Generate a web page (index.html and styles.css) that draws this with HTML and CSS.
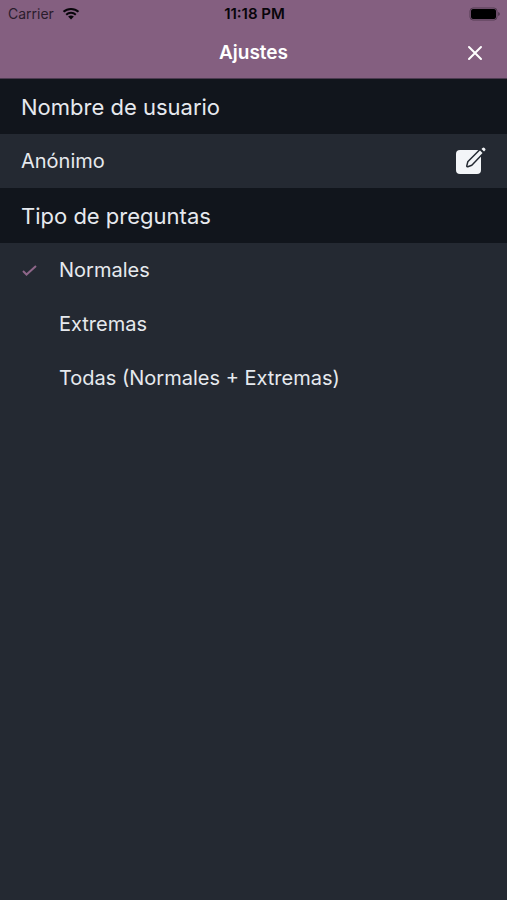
FILE: index.html
```html
<!DOCTYPE html>
<html lang="es">
<head>
  <meta charset="utf-8">
  <meta name="viewport" content="width=device-width, initial-scale=1">
  <title>Ajustes</title>
  <link rel="stylesheet" href="styles.css">
</head>
<body>
  <header class="top">
    <div class="status">
      <span class="carrier">Carrier
        <svg class="wifi" viewBox="0 0 18 13" aria-hidden="true">
          <path d="M1.500 4.800C5.700 .9 12.300 .9 16.500 4.800M4.200 7.700C6.900 5.200 11.100 5.200 13.800 7.700"/>
          <path class="solid" d="M6.100 9.600Q9 7.300 11.900 9.600L9 12.600Z"/>
        </svg>
      </span>
      <span class="clock">11:18 PM</span>
      <svg class="battery" viewBox="0 0 32 14" aria-hidden="true">
        <rect class="shell" x="1" y="1" width="27" height="12" rx="3"/>
        <rect x="2" y="2" width="25" height="10" rx="2"/>
        <path class="tip" d="M29 5Q31 5.500 31 7T29 9Z"/>
      </svg>
    </div>
    <div class="nav">
      <h1 class="title">Ajustes</h1>
      <button class="icon-button" type="button" aria-label="Cerrar">
        <svg class="close" viewBox="0 0 16 16" aria-hidden="true"><path d="M2 2 14 14M14 2 2 14"/></svg>
      </button>
    </div>
  </header>
  <main>
    <section>
      <h2 class="heading">Nombre de usuario</h2>
      <div class="row user">
        <span>Anónimo</span>
        <button class="icon-button" type="button" aria-label="Editar nombre">
          <svg class="edit" viewBox="0 0 30 28" aria-hidden="true">
            <rect class="sheet" x="0" y="3" width="25" height="24" rx="4"/>
            <path class="outline" d="M11.500 19 12.500 15 24 3.500 26.500 6 15.500 17.500Z"/>
            <path class="pencil" d="M11.500 19 12.500 15 24 3.500 26.500 6 15.500 17.500Z"/>
            <path class="sheet" d="M25.500 2 26.500 1Q27.500 0 28.800 1.200T29 3.500L28 4.500Z"/>
          </svg>
        </button>
      </div>
    </section>
    <section>
      <h2 class="heading">Tipo de preguntas</h2>
      <label class="row option">
        <input class="radio" type="radio" name="tipo" checked>
        <svg class="check" viewBox="0 0 16 16" aria-hidden="true"><path d="M2 9 5.500 12.500 15 4"/></svg>
        <span>Normales</span>
      </label>
      <label class="row option">
        <input class="radio" type="radio" name="tipo">
        <svg class="check" viewBox="0 0 16 16" aria-hidden="true"><path d="M2 9 5.500 12.500 15 4"/></svg>
        <span>Extremas</span>
      </label>
      <label class="row option">
        <input class="radio" type="radio" name="tipo">
        <svg class="check" viewBox="0 0 16 16" aria-hidden="true"><path d="M2 9 5.500 12.500 15 4"/></svg>
        <span>Todas (Normales + Extremas)</span>
      </label>
    </section>
  </main>
</body>
</html>
```
FILE: styles.css
```css
* {
  box-sizing: border-box;
}

body {
  margin: 0;
  min-height: 100vh;
  background: #242932;
  color: #e6e9ee;
  font-family: Inter, "Liberation Sans", sans-serif;
  font-size: 20px;
  line-height: 24px;
}

.top {
  background: #845f80;
  border-bottom: 1px solid #4c3b50;
}

.status {
  display: grid;
  grid-template-columns: 1fr auto 1fr;
  align-items: center;
  height: 27px;
  padding: 0 6px 0 8px;
  color: #08050a;
  font-size: 14px;
}

.carrier {
  display: flex;
  align-items: center;
  gap: 8px;
  color: #2a1c2c;
}

.wifi {
  width: 18px;
  height: 13px;
  fill: none;
  stroke: #08050a;
  stroke-width: 2;
}

.wifi .solid {
  fill: #08050a;
  stroke: none;
}

.clock {
  font-size: 15px;
  font-weight: 600;
}

.battery {
  justify-self: end;
  width: 32px;
  height: 14px;
}

.shell {
  fill: none;
  stroke: #553c53;
}

.tip {
  fill: #553c53;
}

.nav {
  display: grid;
  grid-template-columns: 1fr auto 1fr;
  align-items: center;
  height: 51px;
  padding: 0 24px;
}

.title {
  grid-column: 2;
  margin: 0;
  color: #fff;
  font-size: 19px;
  font-weight: 600;
}

.icon-button {
  display: flex;
  justify-self: end;
  padding: 0;
  border: 0;
  background: none;
  cursor: pointer;
}

.close {
  width: 16px;
  height: 16px;
  fill: none;
  stroke: #fff;
  stroke-width: 2;
  stroke-linecap: round;
}

.heading {
  margin: 0;
  padding: 16px 21px 15px;
  background: #11151c;
  font-size: 22px;
  font-weight: 400;
  line-height: 24px;
}

.row {
  display: flex;
  align-items: center;
  min-height: 54px;
  padding: 0 21px;
}

.user {
  justify-content: space-between;
}

.edit {
  width: 30px;
  height: 28px;
}

.sheet {
  fill: #f3f5f8;
}

.outline {
  fill: none;
  stroke: #242932;
  stroke-width: 3;
  stroke-linejoin: round;
}

.pencil {
  fill: #f3f5f8;
}

.option {
  gap: 22px;
  cursor: pointer;
}

.radio {
  position: absolute;
  margin: 0;
  width: 16px;
  height: 16px;
  appearance: none;
}

.check {
  width: 16px;
  height: 16px;
  fill: none;
  stroke: #8e6689;
  stroke-width: 2;
  visibility: hidden;
}

.radio:checked + .check {
  visibility: visible;
}
```
